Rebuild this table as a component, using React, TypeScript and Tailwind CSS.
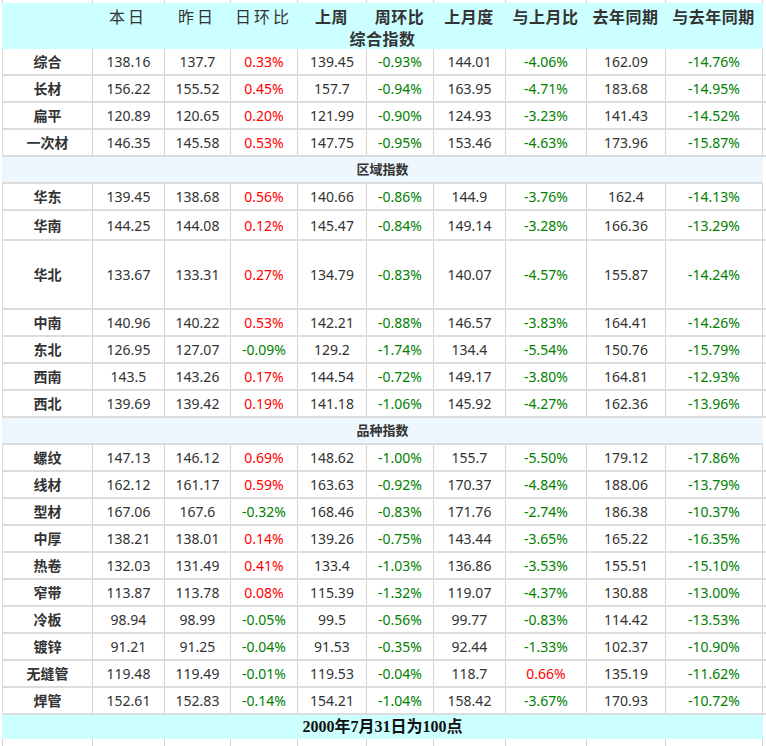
import type { ReactNode } from "react";

type Row = { name: string; values: string[]; h?: string };

const cols = "grid grid-cols-[90px_72px_66px_67px_69px_67px_72px_81px_79px_97px]";
const sans = "font-['Noto_Sans','Noto_Sans_CJK_SC',sans-serif]";

const headers = ["本日", "昨日", "日环比", "上周", "周环比", "上月度", "与上月比", "去年同期", "与去年同期"];

const groups: { title?: string; rows: Row[] }[] = [
  {
    rows: [
      { name: "综合", values: ["138.16", "137.7", "0.33%", "139.45", "-0.93%", "144.01", "-4.06%", "162.09", "-14.76%"] },
      { name: "长材", values: ["156.22", "155.52", "0.45%", "157.7", "-0.94%", "163.95", "-4.71%", "183.68", "-14.95%"] },
      { name: "扁平", values: ["120.89", "120.65", "0.20%", "121.99", "-0.90%", "124.93", "-3.23%", "141.43", "-14.52%"] },
      { name: "一次材", values: ["146.35", "145.58", "0.53%", "147.75", "-0.95%", "153.46", "-4.63%", "173.96", "-15.87%"] },
    ],
  },
  {
    title: "区域指数",
    rows: [
      { name: "华东", values: ["139.45", "138.68", "0.56%", "140.66", "-0.86%", "144.9", "-3.76%", "162.4", "-14.13%"] },
      { name: "华南", values: ["144.25", "144.08", "0.12%", "145.47", "-0.84%", "149.14", "-3.28%", "166.36", "-13.29%"], h: "h-[28px]" },
      { name: "华北", values: ["133.67", "133.31", "0.27%", "134.79", "-0.83%", "140.07", "-4.57%", "155.87", "-14.24%"], h: "h-[67px]" },
      { name: "中南", values: ["140.96", "140.22", "0.53%", "142.21", "-0.88%", "146.57", "-3.83%", "164.41", "-14.26%"] },
      { name: "东北", values: ["126.95", "127.07", "-0.09%", "129.2", "-1.74%", "134.4", "-5.54%", "150.76", "-15.79%"] },
      { name: "西南", values: ["143.5", "143.26", "0.17%", "144.54", "-0.72%", "149.17", "-3.80%", "164.81", "-12.93%"] },
      { name: "西北", values: ["139.69", "139.42", "0.19%", "141.18", "-1.06%", "145.92", "-4.27%", "162.36", "-13.96%"] },
    ],
  },
  {
    title: "品种指数",
    rows: [
      { name: "螺纹", values: ["147.13", "146.12", "0.69%", "148.62", "-1.00%", "155.7", "-5.50%", "179.12", "-17.86%"] },
      { name: "线材", values: ["162.12", "161.17", "0.59%", "163.63", "-0.92%", "170.37", "-4.84%", "188.06", "-13.79%"] },
      { name: "型材", values: ["167.06", "167.6", "-0.32%", "168.46", "-0.83%", "171.76", "-2.74%", "186.38", "-10.37%"] },
      { name: "中厚", values: ["138.21", "138.01", "0.14%", "139.26", "-0.75%", "143.44", "-3.65%", "165.22", "-16.35%"] },
      { name: "热卷", values: ["132.03", "131.49", "0.41%", "133.4", "-1.03%", "136.86", "-3.53%", "155.51", "-15.10%"] },
      { name: "窄带", values: ["113.87", "113.78", "0.08%", "115.39", "-1.32%", "119.07", "-4.37%", "130.88", "-13.00%"] },
      { name: "冷板", values: ["98.94", "98.99", "-0.05%", "99.5", "-0.56%", "99.77", "-0.83%", "114.42", "-13.53%"] },
      { name: "镀锌", values: ["91.21", "91.25", "-0.04%", "91.53", "-0.35%", "92.44", "-1.33%", "102.37", "-10.90%"] },
      { name: "无缝管", values: ["119.48", "119.49", "-0.01%", "119.53", "-0.04%", "118.7", "0.66%", "135.19", "-11.62%"] },
      { name: "焊管", values: ["152.61", "152.83", "-0.14%", "154.21", "-1.04%", "158.42", "-3.67%", "170.93", "-10.72%"] },
    ],
  },
];

function tone(v: string) {
  if (!v.endsWith("%")) return "text-[#333333]";
  return v.startsWith("-") ? "text-[#008000]" : "text-[#ff0000]";
}

function Lines({ h }: { h: string }) {
  return (
    <div className={`${cols} ${h} border-l border-[#d4d4d4]`}>
      {Array.from({ length: 10 }).map((_, i) => (
        <div key={i} className="border-r border-[#d4d4d4]" />
      ))}
    </div>
  );
}

function Band({ children, className }: { children: ReactNode; className: string }) {
  return <div className={`flex w-[761px] items-center justify-center ${className}`}>{children}</div>;
}

export default function App() {
  return (
    <div className={`h-[746px] w-[766px] overflow-hidden bg-white pl-[2px] ${sans}`}>
      <Lines h="h-[3px]" />

      <div className="h-[46px] w-[761px] bg-[#ccffff] text-[16px] leading-none text-[#333333]">
        <div className={`${cols} h-[26px] items-end pb-[4px]`}>
          <div />
          {headers.map((t, i) => (
            <div key={t} className={`text-center ${i < 3 ? "font-normal tracking-[3px]" : "font-bold tracking-[0.5px]"}`}>
              {t}
            </div>
          ))}
        </div>
        <div className="pt-[2px] text-center font-bold tracking-[0.5px]">综合指数</div>
      </div>

      {groups.map((g, gi) => (
        <div key={gi}>
          {g.title && (
            <Band className="h-[27px] border-b-2 border-[#dcdcdc] bg-[#edf7fd] text-[13px] font-bold text-[#333333]">
              {g.title}
            </Band>
          )}
          {g.rows.map((r) => (
            <div key={r.name} className={`${cols} border-b-2 border-l border-[#dcdcdc] text-[14px]`}>
              <div className={`flex ${r.h ?? "h-[25px]"} items-center justify-center border-r border-[#d4d4d4] font-bold text-[#333333]`}>
                {r.name}
              </div>
              {r.values.map((v, i) => (
                <div key={i} className={`flex items-center justify-center border-r border-[#d4d4d4] ${tone(v)}`}>
                  {v}
                </div>
              ))}
            </div>
          ))}
        </div>
      ))}

      <Band className="h-[24px] bg-[#ccffff] font-['Liberation_Serif','Noto_Sans_CJK_SC',serif] text-[16px] font-bold text-[#111111]">
        2000年7月31日为100点
      </Band>
      <Lines h="h-[10px]" />
    </div>
  );
}
